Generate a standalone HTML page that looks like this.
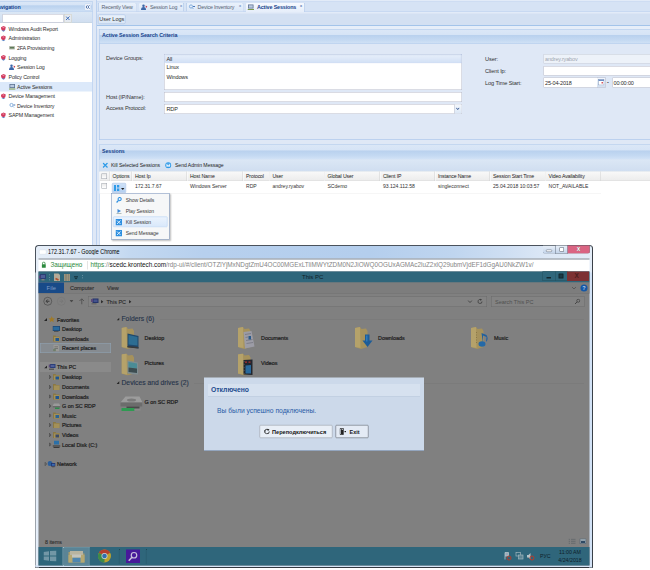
<!DOCTYPE html>
<html lang="en">
<head>
<meta charset="utf-8">
<title>Active Sessions</title>
<style>
html,body{margin:0;padding:0;}
body{width:650px;height:570px;overflow:hidden;background:#fff;font-family:"Liberation Sans",sans-serif;}
#s{position:absolute;left:0;top:0;width:1300px;height:1140px;transform:scale(.5);transform-origin:0 0;overflow:hidden;background:#fff;font-size:11px;color:#222;}
#s div,#s span,#s svg{position:absolute;box-sizing:border-box;white-space:nowrap;}
.hd{background:linear-gradient(#dbe7f7 0,#d6e4f6 36%,#b9d1ee 42%,#c4d9f2 75%,#d1e2f6 100%);border:1px solid #a9c5ea;}
.ht{font-weight:bold;font-size:10.6px;letter-spacing:-.1px;color:#15428b;line-height:14px;}
.tb{background:linear-gradient(#dbe7f5,#d0def0);}
.in{background:#fff;border:1px solid #b5b8c8;}
.tr{left:0;width:184px;height:19px;line-height:19px;font-size:10.6px;letter-spacing:-.27px;color:#2d2d2d;}
.tr b{font-weight:normal;position:absolute;}
.lb{font-size:11.3px;letter-spacing:-.25px;line-height:16px;color:#333;}
.ft{font-size:11px;letter-spacing:-.3px;line-height:16px;color:#2a2a2a;}
.tab{top:5px;height:18px;border:1px solid #a6c0e4;border-bottom:none;border-radius:3px 3px 0 0;background:linear-gradient(#e9f1fb,#dbe7f7);font-size:10.5px;letter-spacing:-.3px;line-height:17px;color:#566273;}
.gh{top:0;height:19px;line-height:20px;font-size:10.4px;letter-spacing:-.3px;color:#222;border-right:1px solid #d0d0d0;border-left:1px solid #fff;padding-left:5px;}
.gc{top:0;height:25px;line-height:20px;font-size:10.2px;letter-spacing:-.05px;color:#333;padding-left:6px;}
.mi{left:3px;width:110px;height:20px;line-height:20px;font-size:10.2px;letter-spacing:-.2px;color:#3a3a3a;}
.mi b{font-weight:normal;position:absolute;left:25.5px;}
.xt{font-size:10.8px;line-height:16px;color:#1c1c1c;-webkit-text-stroke:.4px #1c1c1c;}
.xl{font-size:11px;line-height:16px;color:#2a2a2a;-webkit-text-stroke:.2px #2a2a2a;}
</style>
</head>
<body>
<div id="s">
<!-- page background -->
<div style="left:0;top:0;width:1300px;height:490px;background:#dfe8f6"></div>

<!-- ============ NAVIGATION PANEL ============ -->
<div style="left:-6px;top:23px;width:191px;height:470px;background:#fff;border:1px solid #99bbe8;border-top:none"></div>
<div class="hd" style="left:-6px;top:2px;width:191px;height:22px"></div>
<div class="ht" style="left:-12px;top:6px">Navigation</div>
<div style="left:169px;top:7px;width:13px;height:14px;background:#f6f9fe;border:1px solid #b7cdec;border-radius:2px"></div>
<svg style="left:171px;top:10px" width="9" height="8" viewBox="0 0 9 8"><path d="M4 .5 L1 4 L4 7.5 M8 .5 L5 4 L8 7.5" fill="none" stroke="#274f92" stroke-width="1.6"/></svg>
<div class="tb" style="left:-5px;top:24px;width:189px;height:22px;border-bottom:1px solid #a9bfd3"></div>
<div class="in" style="left:5px;top:28px;width:122px;height:17px"></div>
<div style="left:128px;top:28px;width:15px;height:17px;background:#e4e9f0;border:1px solid #cfcdbf"></div>
<svg style="left:131px;top:32px" width="9" height="9" viewBox="0 0 9 9"><path d="M1 1 L8 8 M8 1 L1 8" stroke="#3a6db8" stroke-width="1.9"/></svg>

<div style="left:-5px;top:164px;width:189px;height:19px;background:#dce9fa"></div>
<div class="tr" style="top:48px"><svg style="left:1px;top:3px" width="11" height="13" viewBox="0 0 11 13"><path d="M2 10 L6 12.5 L9.5 10 L6 8Z" fill="#5a8fd0"/><path d="M1 3.5 L6 1 L10.5 3 L9.5 8.5 L5.5 10.5 L1.5 8Z" fill="#d23a5e"/><path d="M3 4 L6 2.6 L8.5 4 L6 5.5Z" fill="#ec8aa0"/></svg><b style="left:17px">Windows Audit Report</b></div>
<div class="tr" style="top:67px"><svg style="left:1px;top:3px" width="11" height="13" viewBox="0 0 11 13"><path d="M2 10 L6 12.5 L9.5 10 L6 8Z" fill="#5a8fd0"/><path d="M1 3.5 L6 1 L10.5 3 L9.5 8.5 L5.5 10.5 L1.5 8Z" fill="#d23a5e"/><path d="M3 4 L6 2.6 L8.5 4 L6 5.5Z" fill="#ec8aa0"/></svg><b style="left:17px">Administration</b></div>
<div class="tr" style="top:86px"><svg style="left:18px;top:5px" width="12" height="9" viewBox="0 0 12 9"><rect x="0" y="1" width="12" height="7" rx="1.5" fill="#b4bcae"/><rect x="2" y="3" width="8" height="3" fill="#5f7a58"/></svg><b style="left:34px">2FA Provisioning</b></div>
<div class="tr" style="top:106px"><svg style="left:1px;top:3px" width="11" height="13" viewBox="0 0 11 13"><path d="M2 10 L6 12.5 L9.5 10 L6 8Z" fill="#5a8fd0"/><path d="M1 3.5 L6 1 L10.5 3 L9.5 8.5 L5.5 10.5 L1.5 8Z" fill="#d23a5e"/><path d="M3 4 L6 2.6 L8.5 4 L6 5.5Z" fill="#ec8aa0"/></svg><b style="left:17px">Logging</b></div>
<div class="tr" style="top:125px"><svg style="left:18px;top:3px" width="13" height="13" viewBox="0 0 13 13"><circle cx="5" cy="3.5" r="2.5" fill="#3b66a8"/><path d="M0 12 Q0 6 5 6 Q10 6 10 12Z" fill="#3b66a8"/><path d="M9 3 L13 5 L10 8Z" fill="#c23b4e"/></svg><b style="left:34px">Session Log</b></div>
<div class="tr" style="top:144px"><svg style="left:1px;top:3px" width="11" height="13" viewBox="0 0 11 13"><path d="M2 10 L6 12.5 L9.5 10 L6 8Z" fill="#5a8fd0"/><path d="M1 3.5 L6 1 L10.5 3 L9.5 8.5 L5.5 10.5 L1.5 8Z" fill="#d23a5e"/><path d="M3 4 L6 2.6 L8.5 4 L6 5.5Z" fill="#ec8aa0"/></svg><b style="left:17px">Policy Control</b></div>
<div class="tr" style="top:164px"><svg style="left:18px;top:3px" width="13" height="13" viewBox="0 0 13 13"><rect x="1" y="1" width="11" height="8" fill="#5a6f8f"/><rect x="2.5" y="2.5" width="8" height="5" fill="#b9c9e0"/><rect x="0" y="10" width="13" height="2" fill="#7d9a4a"/></svg><b style="left:34px">Active Sessions</b></div>
<div class="tr" style="top:183px"><svg style="left:1px;top:3px" width="11" height="13" viewBox="0 0 11 13"><path d="M2 10 L6 12.5 L9.5 10 L6 8Z" fill="#5a8fd0"/><path d="M1 3.5 L6 1 L10.5 3 L9.5 8.5 L5.5 10.5 L1.5 8Z" fill="#d23a5e"/><path d="M3 4 L6 2.6 L8.5 4 L6 5.5Z" fill="#ec8aa0"/></svg><b style="left:17px">Device Management</b></div>
<div class="tr" style="top:202px"><svg style="left:18px;top:3px" width="13" height="13" viewBox="0 0 13 13"><circle cx="5" cy="5" r="3.2" fill="none" stroke="#6f9fd6" stroke-width="1.6"/><path d="M7.5 7.5 L10 10" stroke="#6f9fd6" stroke-width="1.6"/><rect x="9" y="4" width="4" height="2" fill="#4a78b8"/></svg><b style="left:34px">Device Inventory</b></div>
<div class="tr" style="top:221px"><svg style="left:1px;top:3px" width="11" height="13" viewBox="0 0 11 13"><path d="M2 10 L6 12.5 L9.5 10 L6 8Z" fill="#5a8fd0"/><path d="M1 3.5 L6 1 L10.5 3 L9.5 8.5 L5.5 10.5 L1.5 8Z" fill="#d23a5e"/><path d="M3 4 L6 2.6 L8.5 4 L6 5.5Z" fill="#ec8aa0"/></svg><b style="left:17px">SAPM Management</b></div>

<!-- ============ MAIN PANEL ============ -->
<div style="left:193px;top:0;width:1110px;height:490px;border-left:1px solid #99bbe8;background:#dfe8f6"></div>
<!-- tab strip -->
<div style="left:194px;top:0;width:1110px;height:28px;background:#e2ebf8"></div>
<div style="left:194px;top:3px;width:1110px;height:20px;background:#d6e3f5;border-top:1px solid #c0d3ef;border-bottom:1px solid #b4cbec"></div>
<div class="tab" style="left:196px;width:77px"><span style="left:6px;top:0px">Recently View</span></div>
<div class="tab" style="left:277px;width:91px"><svg style="left:4px;top:2px" width="13" height="13" viewBox="0 0 13 13"><circle cx="5" cy="3.5" r="2.5" fill="#3b66a8"/><path d="M0 12 Q0 6 5 6 Q10 6 10 12Z" fill="#3b66a8"/><path d="M9 3 L13 5 L10 8Z" fill="#c23b4e"/></svg><span style="left:22px;top:0px">Session Log</span><span style="left:82px;top:2px;line-height:8px;font-size:7.5px;color:#6d8ab8;font-weight:bold">x</span></div>
<div class="tab" style="left:372px;width:115px"><svg style="left:4px;top:2px" width="13" height="13" viewBox="0 0 13 13"><circle cx="5" cy="5" r="3.2" fill="none" stroke="#6f9fd6" stroke-width="1.6"/><path d="M7.5 7.5 L10 10" stroke="#6f9fd6" stroke-width="1.6"/><rect x="9" y="4" width="4" height="2" fill="#4a78b8"/></svg><span style="left:22px;top:0px">Device Inventory</span><span style="left:105px;top:2px;line-height:8px;font-size:7.5px;color:#6d8ab8;font-weight:bold">x</span></div>
<div class="tab" style="left:491px;width:119px;height:19px;font-size:10.8px;background:linear-gradient(#f6f9fe,#e6eefa);border-color:#a9c2e6;color:#15428b;font-weight:bold"><svg style="left:3px;top:2px" width="13" height="13" viewBox="0 0 13 13"><rect x="1" y="1" width="11" height="8" fill="#5a6f8f"/><rect x="2.5" y="2.5" width="8" height="5" fill="#b9c9e0"/><rect x="0" y="10" width="13" height="2" fill="#7d9a4a"/></svg><span style="left:22px;top:0px">Active Sessions</span><span style="left:108px;top:2px;line-height:8px;font-size:7.5px;color:#4a6ea8;font-weight:bold">x</span></div>
<!-- toolbar -->
<div style="left:194px;top:27px;width:1110px;height:25px;background:#d3e0f2;border-bottom:2px solid #a3c4ea"></div>
<div style="left:194px;top:52px;width:1110px;height:6px;background:#e6eef9"></div>
<div style="left:196px;top:29px;width:55px;height:19px;background:linear-gradient(#eaf2fb,#d9e6f6);border:1px solid #a9c3e6;border-radius:3px;font-size:11px;line-height:17px;color:#333;text-align:center">User Logs</div>

<!-- search criteria panel -->
<div class="hd" style="left:198px;top:58px;width:1110px;height:30px"></div>
<div class="ht" style="left:204px;top:63px">Active Session Search Criteria</div>
<div style="left:198px;top:88px;width:1110px;height:191px;background:#dfe8f6;border:1px solid #99bbe8;border-top:none"></div>
<div class="lb" style="left:212px;top:108px">Device Groups:</div>
<div class="lb" style="left:212px;top:186px">Host (IP/Name):</div>
<div class="lb" style="left:212px;top:208px">Access Protocol:</div>
<div class="in" style="left:328px;top:108px;width:596px;height:72px"></div>
<div style="left:329px;top:109px;width:594px;height:17px;background:linear-gradient(#e6eefa,#d3e1f5);border:1px dotted #a3bae9"></div>
<div class="ft" style="left:333px;top:109px">All</div>
<div class="ft" style="left:333px;top:126px">Linux</div>
<div class="ft" style="left:333px;top:145px">Windows</div>
<div class="in" style="left:328px;top:184px;width:596px;height:20px"></div>
<div class="in" style="left:328px;top:208px;width:596px;height:20px"></div>
<div class="ft" style="left:333px;top:210px">RDP</div>
<div style="left:908px;top:209px;width:15px;height:18px;background:linear-gradient(#f3f7fc,#dbe7f6);border-left:1px solid #b5b8c8"></div>
<svg style="left:911px;top:215px" width="9" height="6" viewBox="0 0 9 6"><path d="M0.5 0.5 L4.5 5 L8.5 0.5 L6.5 0.5 L4.5 2.8 L2.5 0.5Z" fill="#2b4f8c"/></svg>

<div class="lb" style="left:970px;top:109px">User:</div>
<div class="lb" style="left:970px;top:133px">Client Ip:</div>
<div class="lb" style="left:970px;top:157px">Log Time Start:</div>
<div class="in" style="left:1087px;top:108px;width:230px;height:19px;background:#edf2f9;border-color:#c3c9d6"></div>
<div class="ft" style="left:1090px;top:109px;color:#a0a6b0">andrey.ryabov</div>
<div class="in" style="left:1087px;top:132px;width:230px;height:19px"></div>
<div class="in" style="left:1087px;top:155px;width:108px;height:20px"></div>
<div class="ft" style="left:1090px;top:157px">25-04-2018</div>
<div style="left:1194px;top:155px;width:17px;height:20px;background:linear-gradient(#f3f7fc,#d3e0f1);border:1px solid #b5b8c8;border-left:none"></div>
<svg style="left:1196px;top:158px" width="13" height="13" viewBox="0 0 13 13"><rect x="1" y="1" width="11" height="11" fill="#fff" stroke="#7f93b4"/><rect x="1" y="1" width="11" height="3" fill="#6f8fc4"/><rect x="7" y="6" width="3" height="3" fill="#d6555f"/></svg>
<div class="lb" style="left:1214px;top:156px;font-weight:bold">-</div>
<div class="in" style="left:1225px;top:155px;width:90px;height:20px"></div>
<div class="ft" style="left:1227px;top:157px">00:00:00</div>

<!-- ============ SESSIONS PANEL ============ -->
<div style="left:198px;top:318px;width:1110px;height:180px;background:#fff;border-left:1px solid #99bbe8"></div>
<div class="hd" style="left:198px;top:289px;width:1110px;height:30px"></div>
<div class="ht" style="left:204px;top:295px;font-size:10.5px">Sessions</div>
<div class="tb" style="left:199px;top:319px;width:1110px;height:24px;border-bottom:1px solid #a9bfd3"></div>
<svg style="left:205px;top:325px" width="11" height="11" viewBox="0 0 11 11"><path d="M1 1 L10 10 M10 1 L1 10" stroke="#2e9be8" stroke-width="2.4"/></svg>
<div style="left:222px;top:323px;font-size:10.2px;letter-spacing:-.1px;line-height:16px;color:#222">Kill Selected Sessions</div>
<svg style="left:330px;top:324px" width="13" height="13" viewBox="0 0 13 13"><circle cx="6.5" cy="6.5" r="6" fill="#2e9be8"/><path d="M3 4 L10 4 L10 9 L3 9Z M3 4 L6.5 7 L10 4" fill="#e8f3fc" stroke="#e8f3fc" stroke-width=".6"/></svg>
<div style="left:350px;top:323px;font-size:10.2px;letter-spacing:-.1px;line-height:16px;color:#222">Send Admin Message</div>

<!-- grid header -->
<div style="left:199px;top:343px;width:1110px;height:19px;background:linear-gradient(#f9f9f9,#ececec);border-bottom:1px solid #d0d0d0">
 <div class="gh" style="left:0;width:21px"></div>
 <div class="gh" style="left:21px;width:44px;padding-left:4px">Options</div>
 <div class="gh" style="left:65px;width:110px">Host Ip</div>
 <div class="gh" style="left:175px;width:112px">Host Name</div>
 <div class="gh" style="left:287px;width:53px">Protocol</div>
 <div class="gh" style="left:340px;width:110px">User</div>
 <div class="gh" style="left:450px;width:111px">Global User</div>
 <div class="gh" style="left:561px;width:110px">Client IP</div>
 <div class="gh" style="left:671px;width:110px">Instance Name</div>
 <div class="gh" style="left:781px;width:111px">Session Start Time</div>
 <div class="gh" style="left:892px;width:110px">Video Availability</div>
</div>
<div style="left:203px;top:347px;width:11px;height:11px;background:linear-gradient(#e8e8e8,#fff);border:1px solid #9a9fa8"></div>
<!-- grid row -->
<div style="left:199px;top:362px;width:1003px;height:25px;background:#fff;border-bottom:1px solid #ededed">
 <div class="gc" style="left:65px">172.31.7.67</div>
 <div class="gc" style="left:175px">Windows Server</div>
 <div class="gc" style="left:287px">RDP</div>
 <div class="gc" style="left:340px">andrey.ryabov</div>
 <div class="gc" style="left:450px">SCdemo</div>
 <div class="gc" style="left:561px">93.124.112.58</div>
 <div class="gc" style="left:671px">singleconnect</div>
 <div class="gc" style="left:781px">25.04.2018 10:03:57</div>
 <div class="gc" style="left:892px">NOT_AVAILABLE</div>
</div>
<div style="left:203px;top:366px;width:11px;height:11px;background:linear-gradient(#e8e8e8,#fff);border:1px solid #9a9fa8"></div>
<div style="left:224px;top:366px;width:28px;height:20px;background:linear-gradient(#cfe2f8,#b2cef0);border:1px solid #86abdd;border-radius:2px"></div>
<svg style="left:228px;top:370px" width="11" height="12" viewBox="0 0 11 12"><rect x="0" y="0" width="4" height="12" fill="#2e9be8"/><rect x="6" y="0" width="5" height="5" fill="#2e9be8"/><rect x="6" y="7" width="5" height="5" fill="#2e9be8"/></svg>
<svg style="left:242px;top:376px" width="7" height="4" viewBox="0 0 7 4"><path d="M0 0 L7 0 L3.5 4Z" fill="#222"/></svg>

<!-- options menu -->
<div style="left:222px;top:386px;width:117px;height:93px;background:#f6f7f8;border:1px solid #718bb7;box-shadow:2px 2px 3px rgba(0,0,0,.25)">
 <div style="left:3px;top:46px;width:109px;height:21px;background:linear-gradient(#ebf3fd,#d9e8fb);border:1px solid #aaccf6;border-radius:2px"></div>
 <div class="mi" style="top:3px"><svg style="left:6px;top:4px" width="12" height="12" viewBox="0 0 12 12"><circle cx="7.3" cy="4.2" r="3.2" fill="#e9f3fc" stroke="#2e8fe0" stroke-width="2.1"/><path d="M5 6.8 L1.2 11" stroke="#2e8fe0" stroke-width="2.4"/></svg><b>Show Details</b></div>
 <div class="mi" style="top:25px"><svg style="left:6px;top:4px" width="12" height="12" viewBox="0 0 12 12"><path d="M3 2 L10 6 L3 10Z" fill="#3f8ad8"/><rect x="1" y="10" width="10" height="1.5" fill="#9aa"/></svg><b>Play Session</b></div>
 <div class="mi" style="top:47px"><svg style="left:5px;top:4px" width="13" height="13" viewBox="0 0 13 13"><rect x="0" y="0" width="13" height="13" fill="#2e8fe0"/><path d="M3 3 L10 10 M10 3 L3 10" stroke="#e8f3fc" stroke-width="1.8"/></svg><b>Kill Session</b></div>
 <div class="mi" style="top:69px"><svg style="left:5px;top:4px" width="13" height="13" viewBox="0 0 13 13"><rect x="0" y="0" width="13" height="13" fill="#2e8fe0"/><path d="M3 3 L10 10 M10 3 L3 10" stroke="#e8f3fc" stroke-width="1.8"/></svg><b>Send Message</b></div>
</div>

<!-- ============ below the application (white page) ============ -->
<div style="left:0;top:490px;width:1300px;height:650px;background:#fff"></div>

<!-- ============ CHROME WINDOW ============ -->
<div style="left:70px;top:490px;width:1116px;height:646px;border:2px solid #4a525c;border-right:2px solid #3a4048;border-bottom:2px solid #33383f;border-radius:7px 7px 2px 2px;background:linear-gradient(to right,#e6eef8 0,#dce8f6 8%,#c3d8f0 17%,#b7d0ee 30%,#b4ceed 60%,#bfd5ef 75%,#cfdff3 85%,#dde8f6 92%,#e4edf8 100%)"></div>
<div style="left:71px;top:545px;width:7px;height:590px;background:linear-gradient(to right,#eef4fb,#dbe8f8)"></div>
<div style="left:1178px;top:545px;width:6px;height:590px;background:#d2e2f6"></div>
<div style="left:71px;top:1130px;width:1113px;height:4px;background:#d6e4f6"></div>
<div style="left:78px;top:499px;width:15px;height:10px;background:#fff;border:1px solid #d3dae4;border-radius:3px"></div>
<div style="left:96px;top:495px;font-size:12.8px;line-height:16px;color:#000;transform:scaleX(.845);transform-origin:0 0">172.31.7.67 - Google Chrome</div>
<!-- window buttons -->
<div style="left:1085px;top:491px;width:26px;height:16px;border:1px solid #667283;border-top:none;border-radius:0 0 0 4px;background:linear-gradient(#e9f0f9,#c5d5ea)"></div>
<div style="left:1110px;top:491px;width:26px;height:16px;border:1px solid #667283;border-top:none;background:linear-gradient(#e9f0f9,#c5d5ea)"></div>
<div style="left:1135px;top:491px;width:45px;height:16px;border:1px solid #8d5a68;border-top:none;border-radius:0 0 4px 0;background:#da6482"></div>
<div style="left:1092px;top:499px;width:12px;height:5px;background:#fff;border:1px solid #5c6776;border-radius:2px"></div>
<div style="left:1119px;top:495px;width:9px;height:8px;background:#fff;border:1px solid #4c5766"></div>
<div style="left:1150px;top:491px;width:14px;font-size:13px;line-height:14px;font-weight:bold;color:#fff;text-align:center;text-shadow:0 0 1px #333">x</div>
<!-- address bar -->
<div style="left:77px;top:517px;width:1102px;height:26px;background:#fff;border-top:2px solid #7d8691"></div>
<svg style="left:83px;top:523px" width="9" height="13" viewBox="0 0 9 13"><path d="M2 6 V3.5 A2.5 2.5 0 0 1 7 3.5 V6" fill="none" stroke="#2c8a3e" stroke-width="1.6"/><rect x="0.5" y="5.5" width="8" height="7" rx="1" fill="#2c8a3e"/></svg>
<div style="left:101px;top:521px;font-size:12.7px;line-height:18px;color:#2c8a3e">Защищено</div>
<div style="left:174px;top:522px;width:1px;height:17px;background:#c8c8c8"></div>
<div id="url" style="left:181px;top:521px;font-size:12.7px;line-height:18px;color:#858585"><span style="position:static;color:#2c8a3e">https</span>://<span style="position:static;color:#111">scedc.krontech.com</span>/rdp-ui/#/client/OTZlYjMxNDgtZmU4OC00MGExLTliMWYtZDM0N2JiOWQ0OGUxAGMAc2luZ2xlQ29ubmVjdEF1dGgAU0NkZW1v/</div>

<!-- ============ RDP SESSION (dimmed) ============ -->
<div style="left:77px;top:543px;width:1102px;height:588px;background:#808080"></div>
<div style="left:77px;top:543px;width:1102px;height:22px;background:#2f667b"></div>
<div style="left:604px;top:545px;font-size:12px;line-height:16px;color:#0f2028">This PC</div>
<!-- quick access icons -->
<svg style="left:78px;top:546px" width="92" height="17" viewBox="0 0 92 17"><rect x="2" y="2" width="12" height="10" fill="#2a3f74"/><rect x="4" y="4" width="8" height="6" fill="#4d5e96"/><rect x="5" y="12" width="6" height="3" fill="#7d7d7d"/><rect x="0" y="5" width="3" height="6" fill="#5a3f7a"/><rect x="20" y="3" width="1.5" height="1.5" fill="#8fb0bd"/><rect x="20" y="8" width="1.5" height="1.5" fill="#8fb0bd"/><rect x="20" y="13" width="1.5" height="1.5" fill="#8fb0bd"/><path d="M30 1 H39 L42 4 V16 H30Z" fill="#b3aa98"/><path d="M33 11 L39 14" stroke="#b0502f" stroke-width="3.4"/><path d="M50 2 H62 V16 H50Z" fill="#9a947f"/><rect x="53" y="2" width="2" height="14" fill="#7f7a6a"/><rect x="58" y="2" width="1.5" height="14" fill="#857f6e"/><path d="M70 9 H78 L74 13Z" fill="#15303a"/><rect x="70" y="6" width="8" height="1.5" fill="#15303a"/><rect x="86" y="4" width="1.5" height="1.5" fill="#8fb0bd"/><rect x="86" y="9" width="1.5" height="1.5" fill="#8fb0bd"/></svg>
<!-- rdp window buttons -->
<div style="left:1085px;top:543px;width:26px;height:19px;border:1px solid #23505f;background:#2f667b"></div>
<div style="left:1110px;top:543px;width:25px;height:19px;border:1px solid #23505f;background:#2f667b"></div>
<div style="left:1134px;top:543px;width:44px;height:19px;background:#7d3133"></div>
<div style="left:1093px;top:554px;width:9px;height:3px;background:#13262e"></div>
<div style="left:1117px;top:547px;width:10px;height:10px;background:#1b3a46;border:2px solid #13262e;border-radius:1px"></div>
<div style="left:1149px;top:544px;font-size:13px;line-height:15px;font-weight:bold;color:#4a1c1e">X</div>
<!-- ribbon tabs -->
<div style="left:77px;top:565px;width:1102px;height:21px;background:#7d7d7d"></div>
<div style="left:77px;top:565px;width:51px;height:21px;background:#184a88;font-size:11.5px;line-height:21px;color:#7f9ec6;text-align:center">File</div>
<div class="xl" style="left:140px;top:568px">Computer</div>
<div class="xl" style="left:214px;top:568px">View</div>
<svg style="left:1143px;top:573px" width="10" height="6" viewBox="0 0 10 6"><path d="M1 1 L5 5 L9 1" fill="none" stroke="#4a4a4a" stroke-width="1.4"/></svg>
<div style="left:1161px;top:569px;width:14px;height:14px;border-radius:7px;background:#1457a6;color:#b9cde6;font-size:11px;font-weight:bold;line-height:14px;text-align:center">?</div>
<div style="left:77px;top:586px;width:1102px;height:1px;background:#6f6f6f"></div>
<!-- nav row -->
<div style="left:87px;top:594px;width:17px;height:17px;border:1.6px solid #363636;border-radius:9px"></div>
<svg style="left:91px;top:598px" width="9" height="9" viewBox="0 0 9 9"><path d="M8 4.5 H1.5 M4.5 1 L1 4.5 L4.5 8" fill="none" stroke="#333" stroke-width="1.8"/></svg>
<div style="left:114px;top:594px;width:17px;height:17px;border:1.5px solid #747474;border-radius:9px"></div>
<svg style="left:118px;top:598px" width="9" height="9" viewBox="0 0 9 9"><path d="M1 4.5 H7.5 M4.5 1 L8 4.5 L4.5 8" fill="none" stroke="#747474" stroke-width="1.5"/></svg>
<svg style="left:139px;top:600px" width="8" height="5" viewBox="0 0 8 5"><path d="M0 0 H8 L4 5Z" fill="#4a4a4a"/></svg>
<svg style="left:158px;top:596px" width="11" height="13" viewBox="0 0 11 13"><path d="M5.5 13 V2 M1 6 L5.5 1.5 L10 6" fill="none" stroke="#4a4a4a" stroke-width="1.6"/></svg>
<div style="left:176px;top:592px;width:798px;height:22px;border:1px solid #6a6a6a;background:#838383"></div>
<svg style="left:182px;top:596px" width="17" height="14" viewBox="0 0 17 14"><rect x="3" y="1" width="12" height="9" fill="#25356a"/><rect x="5" y="3" width="8" height="5" fill="#44528c"/><rect x="1" y="10" width="10" height="3" fill="#6a6a6a"/><rect x="0" y="2" width="4" height="6" fill="#5a4a7a"/></svg>
<svg style="left:202px;top:600px" width="5" height="7" viewBox="0 0 5 7"><path d="M0 0 L5 3.5 L0 7Z" fill="#303030"/></svg>
<div class="xl" style="left:213px;top:595px">This PC</div>
<svg style="left:258px;top:600px" width="5" height="7" viewBox="0 0 5 7"><path d="M0 0 L5 3.5 L0 7Z" fill="#303030"/></svg>
<svg style="left:935px;top:600px" width="10" height="6" viewBox="0 0 10 6"><path d="M1 1 L5 5 L9 1" fill="none" stroke="#3a3a3a" stroke-width="1.6"/></svg>
<svg style="left:954px;top:597px" width="12" height="12" viewBox="0 0 12 12"><path d="M10 6 A4 4 0 1 1 8 2.5" fill="none" stroke="#3a3a3a" stroke-width="1.5"/><path d="M6.5 0 L10 2.5 L6.5 4.5Z" fill="#3a3a3a"/></svg>
<div style="left:982px;top:592px;width:187px;height:22px;border:1px solid #6a6a6a;background:#838383"></div>
<div style="left:990px;top:595px;font-size:11px;line-height:16px;color:#505050">Search This PC</div>
<svg style="left:1149px;top:597px" width="12" height="12" viewBox="0 0 12 12"><circle cx="7.5" cy="4.5" r="3" fill="none" stroke="#404040" stroke-width="1.5"/><path d="M5.3 6.7 L1 11" stroke="#404040" stroke-width="1.8"/></svg>

<!-- explorer navigation tree -->
<div style="left:80px;top:686px;width:142px;height:20px;border:1px solid #8fa3b4;background:#868b90"></div>
<div style="left:80px;top:724px;width:142px;height:20px;background:#8a8a8a"></div>
<svg style="left:88px;top:636px" width="6" height="6" viewBox="0 0 6 6"><path d="M6 0 V6 H0Z" fill="#262626"/></svg>
<svg style="left:97px;top:632px" width="13" height="13" viewBox="0 0 13 13"><path d="M6.5 0 L8.3 4.5 L13 4.8 L9.4 7.8 L10.6 12.5 L6.5 9.9 L2.4 12.5 L3.6 7.8 L0 4.8 L4.7 4.5Z" fill="#a07a28"/></svg>
<div class="xt" style="left:114px;top:631px">Favorites</div>
<svg style="left:105px;top:652px" width="15" height="12" viewBox="0 0 15 12"><rect x="0" y="0" width="15" height="10" fill="#1c4672"/><rect x="1.5" y="1.5" width="12" height="7" fill="#2a6a9c"/><rect x="3" y="10" width="9" height="2" fill="#555"/></svg>
<div class="xt" style="left:124px;top:650px">Desktop</div>
<svg style="left:105px;top:670px" width="15" height="14" viewBox="0 0 15 14"><path d="M1 1 H6 L7.5 3 H14 V13 H1Z" fill="#8a7844"/><path d="M3 4 H14 V13 H3Z" fill="#a39058"/><rect x="6" y="6" width="7" height="6" fill="#1f5590"/></svg>
<div class="xt" style="left:124px;top:669px">Downloads</div>
<svg style="left:105px;top:689px" width="15" height="14" viewBox="0 0 15 14"><path d="M2 0 H10 L13 3 V14 H2Z" fill="#9a9a96"/><rect x="4" y="4" width="7" height="1.4" fill="#666"/><rect x="4" y="7" width="7" height="1.4" fill="#666"/><circle cx="4" cy="11" r="3" fill="#6f7f6a"/></svg>
<div class="xt" style="left:124px;top:688px">Recent places</div>
<svg style="left:88px;top:731px" width="6" height="6" viewBox="0 0 6 6"><path d="M6 0 V6 H0Z" fill="#262626"/></svg>
<svg style="left:97px;top:727px" width="15" height="14" viewBox="0 0 15 14"><rect x="3" y="1" width="11" height="8" fill="#2a3f7a"/><rect x="5" y="3" width="7" height="4" fill="#4f5f98"/><rect x="1" y="10" width="10" height="3" fill="#5a5a5a"/><rect x="0" y="2" width="4" height="6" fill="#5a4a7a"/></svg>
<div class="xt" style="left:114px;top:726px">This PC</div>
<svg style="left:98px;top:750px" width="5" height="8" viewBox="0 0 5 8"><path d="M.7 .7 L4.3 4 L.7 7.3Z" fill="none" stroke="#383838" stroke-width="1.2"/></svg>
<svg style="left:105px;top:747px" width="15" height="14" viewBox="0 0 15 14"><path d="M1 1 H6 L7.5 3 H14 V13 H1Z" fill="#8a7844"/><path d="M3 4 H14 V13 H3Z" fill="#a39058"/><rect x="6" y="6" width="7" height="6" fill="#1f5590"/></svg>
<div class="xt" style="left:124px;top:746px">Desktop</div>
<svg style="left:98px;top:770px" width="5" height="8" viewBox="0 0 5 8"><path d="M.7 .7 L4.3 4 L.7 7.3Z" fill="none" stroke="#383838" stroke-width="1.2"/></svg>
<svg style="left:105px;top:767px" width="15" height="14" viewBox="0 0 15 14"><path d="M1 1 H6 L7.5 3 H14 V13 H1Z" fill="#8a7844"/><path d="M3 4 H14 V13 H3Z" fill="#a39058"/></svg>
<div class="xt" style="left:124px;top:766px">Documents</div>
<svg style="left:98px;top:789px" width="5" height="8" viewBox="0 0 5 8"><path d="M.7 .7 L4.3 4 L.7 7.3Z" fill="none" stroke="#383838" stroke-width="1.2"/></svg>
<svg style="left:105px;top:786px" width="15" height="14" viewBox="0 0 15 14"><path d="M1 1 H6 L7.5 3 H14 V13 H1Z" fill="#8a7844"/><path d="M3 4 H14 V13 H3Z" fill="#a39058"/><rect x="6" y="6" width="7" height="6" fill="#1f5590"/></svg>
<div class="xt" style="left:124px;top:785px">Downloads</div>
<svg style="left:98px;top:808px" width="5" height="8" viewBox="0 0 5 8"><path d="M.7 .7 L4.3 4 L.7 7.3Z" fill="none" stroke="#383838" stroke-width="1.2"/></svg>
<svg style="left:105px;top:806px" width="16" height="12" viewBox="0 0 16 12"><path d="M3 1 H13 L16 6 H0Z" fill="#9a9a9a"/><rect x="0" y="6" width="16" height="3" fill="#6a6a6a"/><rect x="5" y="9" width="9" height="3" fill="#2f8a4a"/></svg>
<div class="xt" style="left:124px;top:804px">G on SC RDP</div>
<svg style="left:98px;top:827px" width="5" height="8" viewBox="0 0 5 8"><path d="M.7 .7 L4.3 4 L.7 7.3Z" fill="none" stroke="#383838" stroke-width="1.2"/></svg>
<svg style="left:105px;top:824px" width="15" height="14" viewBox="0 0 15 14"><path d="M1 1 H6 L7.5 3 H14 V13 H1Z" fill="#8a7844"/><path d="M3 4 H14 V13 H3Z" fill="#a39058"/><rect x="6" y="6" width="7" height="6" fill="#2a6294"/></svg>
<div class="xt" style="left:124px;top:823px">Music</div>
<svg style="left:98px;top:846px" width="5" height="8" viewBox="0 0 5 8"><path d="M.7 .7 L4.3 4 L.7 7.3Z" fill="none" stroke="#383838" stroke-width="1.2"/></svg>
<svg style="left:105px;top:843px" width="15" height="14" viewBox="0 0 15 14"><path d="M1 1 H6 L7.5 3 H14 V13 H1Z" fill="#8a7844"/><path d="M3 4 H14 V13 H3Z" fill="#a39058"/></svg>
<div class="xt" style="left:124px;top:842px">Pictures</div>
<svg style="left:98px;top:866px" width="5" height="8" viewBox="0 0 5 8"><path d="M.7 .7 L4.3 4 L.7 7.3Z" fill="none" stroke="#383838" stroke-width="1.2"/></svg>
<svg style="left:105px;top:863px" width="15" height="14" viewBox="0 0 15 14"><path d="M1 1 H6 L7.5 3 H14 V13 H1Z" fill="#8a7844"/><path d="M3 4 H14 V13 H3Z" fill="#a39058"/><rect x="6" y="6" width="7" height="6" fill="#3a4a6a"/></svg>
<div class="xt" style="left:124px;top:862px">Videos</div>
<svg style="left:98px;top:885px" width="5" height="8" viewBox="0 0 5 8"><path d="M.7 .7 L4.3 4 L.7 7.3Z" fill="none" stroke="#383838" stroke-width="1.2"/></svg>
<svg style="left:105px;top:881px" width="16" height="15" viewBox="0 0 16 15"><rect x="3" y="0" width="10" height="8" fill="#2b70a8"/><rect x="0" y="9" width="16" height="4" fill="#5a5a5a"/><rect x="2" y="13" width="12" height="2" fill="#3a3a3a"/></svg>
<div class="xt" style="left:124px;top:881px">Local Disk (C:)</div>
<svg style="left:89px;top:924px" width="5" height="8" viewBox="0 0 5 8"><path d="M.7 .7 L4.3 4 L.7 7.3Z" fill="none" stroke="#383838" stroke-width="1.2"/></svg>
<svg style="left:95px;top:921px" width="16" height="14" viewBox="0 0 16 14"><circle cx="5" cy="6" r="5" fill="#2b5f9c"/><rect x="7" y="5" width="9" height="7" fill="#1f2f6a"/><rect x="8.5" y="6.5" width="6" height="4" fill="#3a6ab0"/><rect x="9" y="12" width="5" height="2" fill="#444"/></svg>
<div class="xt" style="left:114px;top:920px">Network</div>

<!-- explorer content -->
<svg style="left:233px;top:635px" width="6" height="6" viewBox="0 0 6 6"><path d="M6 0 V6 H0Z" fill="#262626"/></svg>
<div style="left:243px;top:628px;font-size:13.5px;line-height:20px;color:#27344a;-webkit-text-stroke:.25px #27344a">Folders (6)</div>
<div style="left:320px;top:639px;width:848px;height:1px;background:#767676"></div>
<svg style="left:233px;top:762px" width="6" height="6" viewBox="0 0 6 6"><path d="M6 0 V6 H0Z" fill="#262626"/></svg>
<div style="left:243px;top:755px;font-size:13.5px;line-height:20px;color:#27344a;-webkit-text-stroke:.25px #27344a">Devices and drives (2)</div>
<div style="left:388px;top:766px;width:780px;height:1px;background:#767676"></div>
<svg style="left:243px;top:654px" width="38" height="44" viewBox="0 0 38 44"><path d="M0 2 L10 0 L13 4 L22 3 L25 8 L25 40 L12 44 L0 40Z" fill="#a6925c"/><path d="M0 2 L10 0 L11 42 L0 40Z" fill="#b5a26a"/><path d="M12 13 L34 18 L34 43 L12 40Z" fill="#21486a"/><path d="M14 16 L32 20 L32 37 L14 35Z" fill="#2d6d92"/><path d="M12 38 L34 40 L34 43 L12 41Z" fill="#3a3a3a"/></svg>
<div class="xt" style="left:289px;top:667px">Desktop</div>
<svg style="left:476px;top:654px" width="38" height="44" viewBox="0 0 38 44"><path d="M0 2 L10 0 L13 4 L22 3 L25 8 L25 40 L12 44 L0 40Z" fill="#a6925c"/><path d="M0 2 L10 0 L11 42 L0 40Z" fill="#b5a26a"/><path d="M11 10 L27 8 L33 39 L14 43Z" fill="#9c9ca6"/><path d="M14 15 L26 13 M15 21 L20 20 M16 27 L29 25 M17 33 L30 31" stroke="#73737d" stroke-width="1.5"/><rect x="21" y="18" width="5" height="7" fill="#2a5a8a"/></svg>
<div class="xt" style="left:522px;top:667px">Documents</div>
<svg style="left:710px;top:654px" width="38" height="44" viewBox="0 0 38 44"><path d="M0 2 L10 0 L13 4 L22 3 L25 8 L25 40 L12 44 L0 40Z" fill="#a6925c"/><path d="M0 2 L10 0 L11 42 L0 40Z" fill="#b5a26a"/><path d="M20 15 H29 V27 H35 L25 40 L15 27 H20Z" fill="#1d5c98"/><path d="M22 17 H25 V29 H22Z" fill="#2f7ab8"/></svg>
<div class="xt" style="left:756px;top:667px">Downloads</div>
<svg style="left:942px;top:654px" width="38" height="44" viewBox="0 0 38 44"><path d="M0 2 L10 0 L13 4 L22 3 L25 8 L25 40 L12 44 L0 40Z" fill="#a6925c"/><path d="M0 2 L10 0 L11 42 L0 40Z" fill="#b5a26a"/><path d="M21 12 L31 16 Q36 24 30 30 L31 20 L24 17 V33 Z" fill="#20609e"/><ellipse cx="22" cy="34" rx="7" ry="5.5" fill="#2469a8"/><path d="M11 10 v2 M11 15 v2 M11 20 v2 M11 25 v2 M11 30 v2" stroke="#8a7848" stroke-width="2"/></svg>
<div class="xt" style="left:988px;top:667px">Music</div>
<svg style="left:243px;top:707px" width="38" height="44" viewBox="0 0 38 44"><path d="M0 2 L10 0 L13 4 L22 3 L25 8 L25 40 L12 44 L0 40Z" fill="#a6925c"/><path d="M0 2 L10 0 L11 42 L0 40Z" fill="#b5a26a"/><path d="M12 14 L33 18 L33 42 L12 40Z" fill="#7f8e92"/><path d="M14 17 L31 20 L31 30 L14 28Z" fill="#4a8c96"/><path d="M14 28 L31 30 L31 39 L14 37Z" fill="#3c4c50"/></svg>
<div class="xt" style="left:289px;top:717px">Pictures</div>
<svg style="left:476px;top:707px" width="38" height="44" viewBox="0 0 38 44"><path d="M0 2 L10 0 L13 4 L22 3 L25 8 L25 40 L12 44 L0 40Z" fill="#a6925c"/><path d="M0 2 L10 0 L11 42 L0 40Z" fill="#b5a26a"/><path d="M11 13 L29 12 L29 43 L11 42Z" fill="#22262e"/><path d="M15 24 L26 23 L26 40 L15 40Z" fill="#2a6a9c"/><path d="M14 17 h4 M21 17 h4" stroke="#b03030" stroke-width="2.5"/><path d="M12 15 v2 M12 21 v2 M12 27 v2 M12 33 v2 M12 39 v2" stroke="#777" stroke-width="1.4"/></svg>
<div class="xt" style="left:522px;top:717px">Videos</div>
<svg style="left:239px;top:791px" width="46" height="34" viewBox="0 0 46 34"><path d="M12 2 H40 L46 14 H2Z" fill="#9c9c9c"/><path d="M2 14 H46 V22 H2Z" fill="#6c6c6c"/><ellipse cx="24" cy="9" rx="9" ry="3" fill="#7a7a7a"/><rect x="14" y="22" width="26" height="5" fill="#4a4a4a"/><path d="M4 25 H30 V31 H4Z" fill="#2f9a52"/><rect x="30" y="26" width="12" height="4" fill="#8a8a8a"/></svg>
<div class="xt" style="left:289px;top:795px">G on SC RDP</div>

<!-- disconnected dialog -->
<div style="left:408px;top:755px;width:440px;height:147px;background:#ccd9ea;border-bottom:2px solid #93a5be"></div>
<div style="left:416px;top:768px;width:424px;height:25px;background:#d6e1ef;border-bottom:1px solid #b3c2d7"></div>
<div style="left:422px;top:770px;font-size:13.6px;line-height:17px;font-weight:bold;color:#1c4a8e">Отключено</div>
<div style="left:434px;top:811px;font-size:13.5px;line-height:20px;color:#2a5ba6">Вы были успешно подключены.</div>
<div style="left:519px;top:850px;width:146px;height:26px;background:#e9eff7;border:1px solid #8f949c;border-radius:2px"></div>
<svg style="left:528px;top:857px" width="12" height="12" viewBox="0 0 12 12"><path d="M10.5 6 A4.5 4.5 0 1 1 8.5 2.3" fill="none" stroke="#222" stroke-width="1.7"/><path d="M7 0 L11 2.5 L7.5 5Z" fill="#222"/><path d="M1.5 6 A4.5 4.5 0 0 1 3.5 2.3" fill="none" stroke="#222" stroke-width="1.7"/></svg>
<div style="left:544px;top:855px;font-size:11.2px;line-height:16px;font-weight:bold;color:#151515">Переподключиться</div>
<div style="left:671px;top:850px;width:66px;height:26px;background:#e4ebf5;border:1px solid #4f545c;border-radius:2px"></div>
<svg style="left:679px;top:856px" width="14" height="14" viewBox="0 0 14 14"><path d="M1 1 H8 V13 H1Z" fill="none" stroke="#222" stroke-width="1.4"/><path d="M3 2 L7 4 V13 L3 12Z" fill="#222"/><rect x="10" y="6" width="3" height="2.4" fill="#222"/></svg>
<div style="left:699px;top:855px;font-size:11px;line-height:16px;font-weight:bold;color:#151515">Exit</div>

<!-- status bar -->
<div style="left:90px;top:1076px;font-size:10.5px;line-height:16px;color:#2a2a2a;-webkit-text-stroke:.2px #2a2a2a">8 items</div>
<svg style="left:1137px;top:1077px" width="36" height="12" viewBox="0 0 36 12"><path d="M0 1.5 h3 M0 5.5 h3 M0 9.5 h3 M5 1.5 h9 M5 5.5 h9 M5 9.5 h9" stroke="#5f6468" stroke-width="1.7"/><rect x="23" y="0.5" width="12" height="10" fill="#8f9ea8" stroke="#4a5a6a"/><rect x="25" y="5" width="8" height="4" fill="#2f4a64"/></svg>

<!-- taskbar -->
<div style="left:77px;top:1094px;width:1102px;height:37px;background:#2f667b"></div>
<svg style="left:87px;top:1101px" width="26" height="22" viewBox="0 0 26 22"><path d="M0 3 L11 1.5 V10 H0Z M13 1.2 L26 0 V10 H13Z M0 12 H11 V20.5 L0 19Z M13 12 H26 V22 L13 20.8Z" fill="#7297a6"/></svg>
<div style="left:125px;top:1094px;width:54px;height:37px;background:#5a8496;border:1px dotted #9dbcc8"></div>
<svg style="left:136px;top:1100px" width="34" height="26" viewBox="0 0 34 26"><path d="M1 4 H12 L14 7 H33 V25 H1Z" fill="#a89c6c"/><path d="M4 2 H30 V14 H4Z" fill="#b8b4a0"/><path d="M1 10 H33 V25 H1Z" fill="#b5a872"/><rect x="9" y="15" width="16" height="10" fill="#4f86b0"/><rect x="8" y="9" width="18" height="6" fill="#c4c4bc"/></svg>
<svg style="left:195px;top:1098px" width="28" height="28" viewBox="0 0 28 28"><circle cx="14" cy="14" r="13" fill="#b9a12f"/><path d="M14 14 L2.7 7.5 A13 13 0 0 1 25.3 7.5Z" fill="#b3402f"/><path d="M14 14 L2.7 7.5 A13 13 0 0 0 14 27Z" fill="#3c8a4a"/><circle cx="14" cy="14" r="6" fill="#c9d4d8"/><circle cx="14" cy="14" r="4.6" fill="#2f6fb0"/></svg>
<div style="left:238px;top:1098px;width:0;height:30px;border-left:1px dotted #1f4756"></div>
<div style="left:252px;top:1099px;width:28px;height:27px;background:#47199a"></div>
<svg style="left:255px;top:1102px" width="22" height="22" viewBox="0 0 22 22"><circle cx="13" cy="8.5" r="5.5" fill="none" stroke="#c9c0dc" stroke-width="2.4"/><path d="M9 12.5 L2.5 19.5" stroke="#c9c0dc" stroke-width="3"/></svg>
<div style="left:292px;top:1098px;width:0;height:30px;border-left:1px dotted #1f4756"></div>
<svg style="left:1008px;top:1103px" width="66" height="20" viewBox="0 0 66 20"><path d="M2 2 V16 M2 2 H9 V9 H2" stroke="#b8c4c8" stroke-width="1.6" fill="#9ab"/><circle cx="10" cy="13" r="4" fill="none" stroke="#b83a2a" stroke-width="2"/><rect x="24" y="2" width="9" height="7" fill="none" stroke="#9fb4bc" stroke-width="1.4"/><rect x="29" y="7" width="9" height="8" fill="#5f8796" stroke="#9fb4bc" stroke-width="1.4"/><path d="M46 7 H49 L53 3 V16 L49 12 H46Z" fill="#b8c4c8"/><circle cx="56" cy="13" r="4" fill="none" stroke="#b83a2a" stroke-width="2"/></svg>
<div style="left:1080px;top:1104px;font-size:10.5px;line-height:16px;color:#0e2029">РУС</div>
<div style="left:1104px;top:1097px;width:72px;text-align:center;font-size:10.5px;line-height:15px;color:#0e2029">11:00 AM</div>
<div style="left:1104px;top:1112px;width:72px;text-align:center;font-size:10.5px;line-height:15px;color:#0e2029">4/24/2018</div>
</div>
</body>
</html>
